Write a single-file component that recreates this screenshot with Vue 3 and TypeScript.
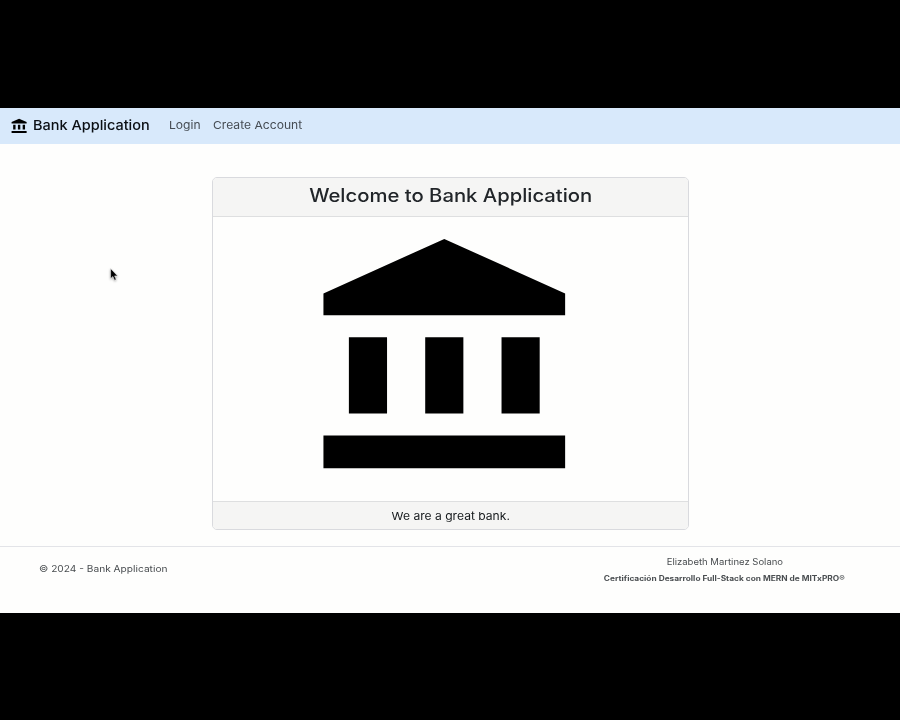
<script setup lang="ts">
interface NavLink {
  label: string
  href: string
}

const brand = 'Bank Application'
const links: NavLink[] = [
  { label: 'Login', href: '#login' },
  { label: 'Create Account', href: '#create' },
]
const bankPath =
  'M4 10v7h3v-7H4zm6 0v7h3v-7h-3zM2 22h19v-3H2v3zm14-12v7h3v-7h-3zm-4.5-9L2 6v2h19V6l-9.5-5z'
</script>

<template>
  <div class="screen">
    <div class="page">
      <nav class="navbar">
        <svg class="logo" viewBox="0 0 24 24" preserveAspectRatio="none"><path :d="bankPath" /></svg>
        <a class="brand" href="#"><span class="wide">{{ brand }}</span></a>
        <a v-for="link in links" :key="link.label" class="link" :href="link.href">
          <span class="wide">{{ link.label }}</span>
        </a>
      </nav>

      <main class="content">
        <section class="card">
          <h1 class="card-header"><span class="wide">Welcome to {{ brand }}</span></h1>
          <div class="card-body">
            <svg class="bank" viewBox="0 0 24 24" preserveAspectRatio="none"><path :d="bankPath" /></svg>
          </div>
          <div class="card-footer"><span class="wide">We are a great bank.</span></div>
        </section>
      </main>

      <footer class="footer">
        <div class="copyright"><span class="wide">© 2024 - {{ brand }}</span></div>
        <div class="credits">
          <div class="author"><span class="wide">Elizabeth Martinez Solano</span></div>
          <div class="course"><span class="wide">Certificación Desarrollo Full-Stack con MERN de MITxPRO®</span></div>
        </div>
      </footer>

      <svg class="cursor" viewBox="0 0 8 13">
        <path d="M.6.6v10l2.3-2.1 1.6 3.7 1.7-.7-1.6-3.6h3z" />
      </svg>
    </div>
  </div>
</template>

<style>
body {
  background: #000;
}
</style>

<style scoped>
.screen {
  box-sizing: border-box;
  width: 900px;
  height: 720px;
  padding: 108px 0 107px;
  background: #000;
  overflow: hidden;
  font-family: Inter, sans-serif;
  color: #212529;
}
.page {
  position: relative;
  display: flex;
  flex-direction: column;
  height: 505px;
  background: #fefefd;
}
.wide {
  display: inline-block;
  white-space: nowrap;
  transform: scaleX(var(--stretch));
}
a {
  color: inherit;
  text-decoration: none;
}
.navbar {
  display: flex;
  flex: none;
  align-items: center;
  box-sizing: border-box;
  height: 36px;
  padding: 0 0 2px 10px;
  background: #d8e9fb;
}
.navbar .wide {
  transform-origin: left center;
}
.logo {
  width: 19px;
  height: 16.4px;
  margin-top: 2px;
}
.brand {
  --stretch: 1.09;
  width: 136px;
  margin-left: 4px;
  font-size: 13.3px;
  font-weight: 500;
  line-height: 34px;
  color: #0b0f14;
}
.link {
  --stretch: 1.1;
  font-size: 11px;
  line-height: 34px;
  color: #454c53;
}
.link:nth-of-type(2) {
  width: 44px;
}
.content {
  flex: none;
  height: 402px;
  padding: 33px 211px 0 212px;
  box-sizing: border-box;
}
.card {
  display: flex;
  flex-direction: column;
  box-sizing: border-box;
  height: 353px;
  border: 1px solid #d9dade;
  border-radius: 5px;
  overflow: hidden;
  text-align: center;
}
.card-header {
  --stretch: 1.126;
  box-sizing: border-box;
  height: 39px;
  margin: 0;
  border-bottom: 1px solid #dedfe0;
  background: #f5f5f4;
  font-size: 18px;
  font-weight: 500;
  line-height: 36px;
}
.card-body {
  flex: 1;
  padding: 11px 0 0 85.3px;
  text-align: left;
}
.bank {
  display: block;
  width: 305.3px;
  height: 262px;
}
.card-footer {
  --stretch: 1.1;
  box-sizing: border-box;
  height: 28px;
  border-top: 1px solid #dedfe0;
  background: #f5f5f4;
  font-size: 11px;
  line-height: 28px;
  color: #14181b;
}
.footer {
  display: flex;
  justify-content: space-between;
  padding: 0 55px 0 38.5px;
  border-top: 1px solid #e3e4e8;
  color: #4a4e51;
}
.copyright {
  --stretch: 1.13;
  font-size: 9px;
  line-height: 43px;
}
.copyright .wide {
  transform-origin: left center;
}
.credits {
  display: flex;
  flex-direction: column;
  width: 241px;
  padding-top: 7px;
}
.credits div {
  display: flex;
  justify-content: center;
}
.author {
  --stretch: 1.08;
  font-size: 8.8px;
  line-height: 16px;
}
.course {
  --stretch: 1.19;
  font-size: 7px;
  font-weight: 700;
  line-height: 17px;
}
.cursor {
  position: absolute;
  left: 110px;
  top: 160px;
  width: 8px;
  height: 13px;
  overflow: visible;
  filter: drop-shadow(0 1px 1px rgba(0, 0, 0, 0.35));
}
.cursor path {
  fill: #000;
  stroke: #fff;
  stroke-width: 0.5;
}
</style>
